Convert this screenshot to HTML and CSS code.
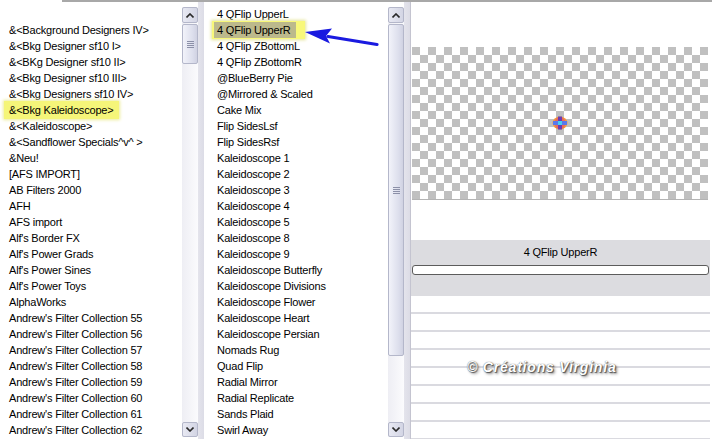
FILE: index.html
```html
<!DOCTYPE html>
<html>
<head>
<meta charset="utf-8">
<link rel="stylesheet" href="styles.css">
</head>
<body>
<div class="top"><div class="top-gap"></div><div class="top-line"></div></div>
<div class="main">
  <div class="list list-left">
    <div class="row"></div>
    <div class="row">&amp;&lt;Background Designers IV&gt;</div>
    <div class="row">&amp;&lt;Bkg Designer sf10 I&gt;</div>
    <div class="row">&amp;&lt;BKg Designer sf10 II&gt;</div>
    <div class="row">&amp;&lt;Bkg Designer sf10 III&gt;</div>
    <div class="row">&amp;&lt;Bkg Designers sf10 IV&gt;</div>
    <div class="row"><span class="hl-left">&amp;&lt;Bkg Kaleidoscope&gt;</span></div>
    <div class="row">&amp;&lt;Kaleidoscope&gt;</div>
    <div class="row">&amp;&lt;Sandflower Specials^v^ &gt;</div>
    <div class="row">&amp;Neu!</div>
    <div class="row">[AFS IMPORT]</div>
    <div class="row">AB Filters 2000</div>
    <div class="row">AFH</div>
    <div class="row">AFS import</div>
    <div class="row">Alf's Border FX</div>
    <div class="row">Alf's Power Grads</div>
    <div class="row">Alf's Power Sines</div>
    <div class="row">Alf's Power Toys</div>
    <div class="row">AlphaWorks</div>
    <div class="row">Andrew's Filter Collection 55</div>
    <div class="row">Andrew's Filter Collection 56</div>
    <div class="row">Andrew's Filter Collection 57</div>
    <div class="row">Andrew's Filter Collection 58</div>
    <div class="row">Andrew's Filter Collection 59</div>
    <div class="row">Andrew's Filter Collection 60</div>
    <div class="row">Andrew's Filter Collection 61</div>
    <div class="row">Andrew's Filter Collection 62</div>
  </div>
  <div class="sb">
    <div class="sb-track">
      <div class="sb-btn"><svg width="8" height="5" viewBox="0 0 8 5"><path d="M0.5 4.5 L4 1 L7.5 4.5" fill="none" stroke="#2a2a2a" stroke-width="1.6"/></svg></div>
      <div class="thumb thumb-short"><div class="grip"><i></i><i></i><i></i><i></i></div></div>
      <div class="sb-fill"></div>
      <div class="sb-btn sb-down"><svg width="8" height="5" viewBox="0 0 8 5"><path d="M0.5 0.5 L4 4 L7.5 0.5" fill="none" stroke="#2a2a2a" stroke-width="1.6"/></svg></div>
    </div>
  </div>
  <div class="strip"></div>
  <div class="list list-mid">
    <div class="row">4 QFlip UpperL</div>
    <div class="row"><span class="hl-mid"><span class="sel">4 QFlip UpperR</span></span></div>
    <div class="row">4 QFlip ZBottomL</div>
    <div class="row">4 QFlip ZBottomR</div>
    <div class="row">@BlueBerry Pie</div>
    <div class="row">@Mirrored &amp; Scaled</div>
    <div class="row">Cake Mix</div>
    <div class="row">Flip SidesLsf</div>
    <div class="row">Flip SidesRsf</div>
    <div class="row">Kaleidoscope 1</div>
    <div class="row">Kaleidoscope 2</div>
    <div class="row">Kaleidoscope 3</div>
    <div class="row">Kaleidoscope 4</div>
    <div class="row">Kaleidoscope 5</div>
    <div class="row">Kaleidoscope 8</div>
    <div class="row">Kaleidoscope 9</div>
    <div class="row">Kaleidoscope Butterfly</div>
    <div class="row">Kaleidoscope Divisions</div>
    <div class="row">Kaleidoscope Flower</div>
    <div class="row">Kaleidoscope Heart</div>
    <div class="row">Kaleidoscope Persian</div>
    <div class="row">Nomads Rug</div>
    <div class="row">Quad Flip</div>
    <div class="row">Radial Mirror</div>
    <div class="row">Radial Replicate</div>
    <div class="row">Sands Plaid</div>
    <div class="row">Swirl Away</div>
  </div>
  <div class="sb">
    <div class="sb-track">
      <div class="sb-btn"><svg width="8" height="5" viewBox="0 0 8 5"><path d="M0.5 4.5 L4 1 L7.5 4.5" fill="none" stroke="#2a2a2a" stroke-width="1.6"/></svg></div>
      <div class="thumb thumb-long"><div class="grip"><i></i><i></i><i></i><i></i></div></div>
      <div class="sb-fill"></div>
      <div class="sb-btn sb-down"><svg width="8" height="5" viewBox="0 0 8 5"><path d="M0.5 0.5 L4 4 L7.5 0.5" fill="none" stroke="#2a2a2a" stroke-width="1.6"/></svg></div>
    </div>
  </div>
  <div class="strip strip-r"></div>
  <div class="preview">
    <div class="checker">
      <svg width="16" height="14" viewBox="0 0 16 14">
        <ellipse cx="8" cy="7" rx="7.5" ry="6.5" fill="#f29a40"/>
        <ellipse cx="8" cy="7" rx="5.5" ry="6" fill="#ea6a5c"/>
        <rect x="6" y="0.5" width="4" height="13" fill="#6a3cb4"/>
        <rect x="1" y="5" width="14" height="4" fill="#5a78ec"/>
        <rect x="6" y="5" width="4" height="4" fill="#48d0f0"/>
      </svg>
    </div>
    <div class="panel">
      <div class="panel-label">4 QFlip UpperR</div>
      <div class="bar"></div>
    </div>
    <div class="lines">
      <div class="line"></div>
      <div class="line"></div>
      <div class="line"></div>
      <div class="line"></div>
      <div class="line"></div>
      <div class="line"></div>
      <div class="line"></div>
      <div class="line"></div>
      <div class="watermark">© Créations Virginia</div>
    </div>
  </div>
</div>
<svg class="arrow" width="712" height="439" viewBox="0 0 712 439">
  <path d="M377 44.5 L328 36.5" stroke="#1a1ae0" stroke-width="3.2" stroke-linecap="round" fill="none"/>
  <path d="M305 32 L332 28.5 L326 36 L330 43.5 Z" fill="#1a1ae0"/>
</svg>
</body>
</html>
```

FILE: styles.css
```css
html, body {
  margin: 0;
  padding: 0;
}
body {
  width: 712px;
  height: 439px;
  overflow: hidden;
  background: #ffffff;
  position: relative;
  font-family: "Liberation Sans", Arial, sans-serif;
  font-size: 11px;
  color: #000;
}
.top {
  display: flex;
  height: 2px;
}
.top-gap {
  width: 62px;
}
.top-line {
  flex: 1;
  background: #a8a8a8;
}
.main {
  display: flex;
  height: 437px;
}
.list {
  padding-top: 4px;
  overflow: hidden;
  letter-spacing: -0.2px;
}
.list-left {
  width: 173px;
  padding-left: 9px;
}
.list-mid {
  width: 171px;
  padding-left: 13px;
}
.row {
  height: 16px;
  line-height: 16px;
  display: flex;
  align-items: center;
  white-space: nowrap;
}
.hl-left {
  margin-left: -5px;
  padding: 1px 6px 1px 5px;
  background: #f5f579;
  box-shadow: 0 0 3px 1px #ecec9c;
}
.hl-mid {
  margin-left: -5px;
  padding: 1px 9px 1px 2px;
  background: #f8f87a;
  box-shadow: 0 0 3px 1px #e4e49a;
}
.sel {
  display: block;
  padding: 0 5px 0 3px;
  background: #bcb98c;
}
.sb {
  width: 16px;
  padding: 5px 0 2px;
  display: flex;
}
.sb-track {
  flex: 1;
  display: flex;
  flex-direction: column;
  background: linear-gradient(90deg, #eeeef4, #fbfbfd);
}
.sb-btn {
  height: 16px;
  box-sizing: border-box;
  border: 1px solid #b4b7ca;
  border-radius: 2px;
  background: linear-gradient(90deg, #e8e9f3, #d3d5e4);
  display: flex;
  align-items: center;
  justify-content: center;
}
.sb-down {
  height: 15px;
}
.thumb {
  margin-top: 1px;
  box-sizing: border-box;
  border: 1px solid #b4b7ca;
  border-radius: 2px;
  background: linear-gradient(90deg, #f2f3fa, #dcdeec 70%, #d0d2e2);
  display: flex;
  align-items: center;
  justify-content: center;
}
.thumb-short {
  height: 40px;
}
.thumb-long {
  height: 332px;
}
.grip {
  display: flex;
  flex-direction: column;
  gap: 1px;
}
.grip i {
  display: block;
  width: 7px;
  height: 1px;
  background: #8c90a8;
}
.sb-fill {
  flex: 1;
}
.strip {
  width: 6px;
  background: linear-gradient(90deg, #e4e4ec, #dcdce6);
}
.strip-r {
  width: 7px;
  box-sizing: border-box;
  border-right: 1px solid #c4c4d0;
}
.preview {
  width: 301px;
  padding-top: 45px;
}
.checker {
  margin-left: 1px;
  width: 296px;
  height: 152px;
  border-bottom: 1px solid #b4b4b4;
  background: repeating-conic-gradient(#ffffff 0 25%, #c0c0c0 0 50%) 0 0 / 16px 16px;
  display: flex;
  align-items: center;
  justify-content: center;
}
.panel {
  margin-top: 40px;
  width: 299px;
  height: 56px;
  box-sizing: border-box;
  padding-top: 5px;
  background: #dcdce0;
}
.panel-label {
  height: 14px;
  line-height: 14px;
  text-align: center;
  letter-spacing: -0.2px;
}
.bar {
  margin: 6px 1px 0;
  height: 10px;
  box-sizing: border-box;
  border: 1px solid #5c5c5c;
  border-radius: 3px;
  background: #ffffff;
}
.lines {
  position: relative;
  width: 299px;
}
.line {
  height: 18px;
  box-sizing: border-box;
  border-bottom: 2px solid #dadae0;
}
.watermark {
  position: absolute;
  left: 56px;
  top: 63px;
  font-family: "Liberation Sans", Arial, sans-serif;
  font-weight: bold;
  font-style: italic;
  font-size: 14px;
  letter-spacing: 0.8px;
  color: #ffffff;
  text-shadow: 0 0 1px #4a4a4a, 1px 1px 1px #555, 2px 2px 3px #888;
  white-space: nowrap;
}
.arrow {
  position: absolute;
  left: 0;
  top: 0;
  pointer-events: none;
}
```
